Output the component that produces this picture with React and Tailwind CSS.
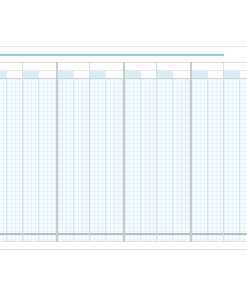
const grid =
  'bg-[#f8fcfe] bg-[image:repeating-linear-gradient(90deg,#e2f3fa_0_1px,transparent_1px_4px),repeating-linear-gradient(180deg,#e6f5fb_0_1px,transparent_1px_4px)]'

function SubColumn({ last }) {
  return (
    <div className={`flex flex-col ${last ? 'flex-1' : 'w-[32px] border-r border-[#dadada]'}`}>
      {/* header */}
      <div className="h-[8px] border-t border-[#e0e0e0] bg-white" />
      <div className="flex h-[8px] border-t border-[#e6e6e6]">
        <div className="w-[16px] bg-[#d6eef8]" />
        <div className="flex-1 bg-white" />
      </div>
      {/* body */}
      <div className="flex h-[155px] border-t border-[#d2d2d2]">
        <div className={`w-[16px] border-r border-[#cde8f4] ${grid}`} />
        <div className={`flex-1 ${grid}`} />
      </div>
      {/* foot */}
      <div className="flex h-[8px] border-t-2 border-[#bdbdbd]">
        <div className={`w-[16px] border-r border-[#cde8f4] ${grid}`} />
        <div className={`flex-1 ${grid}`} />
      </div>
      <div className="h-px bg-[#e0e0e0]" />
    </div>
  )
}

function Section() {
  return (
    <div className="flex w-[67px] shrink-0 border-l-2 border-[#cbcbcb]">
      <SubColumn />
      <SubColumn last />
    </div>
  )
}

export default function App() {
  return (
    <div className="h-[296px] w-[247px] overflow-hidden bg-white">
      <div className="pt-[46px]">
        <div className="h-px w-full bg-[#e6e6e6]" />
        <div className="mt-[7px] h-[2px] w-[224px] bg-[#8ccfe8]" />
        <div className="ml-[-11px] mt-[6px] flex">
          <Section />
          <Section />
          <Section />
          <Section />
        </div>
        <div className="mt-[7px] h-px w-full bg-[#e4e4e4]" />
      </div>
    </div>
  )
}
